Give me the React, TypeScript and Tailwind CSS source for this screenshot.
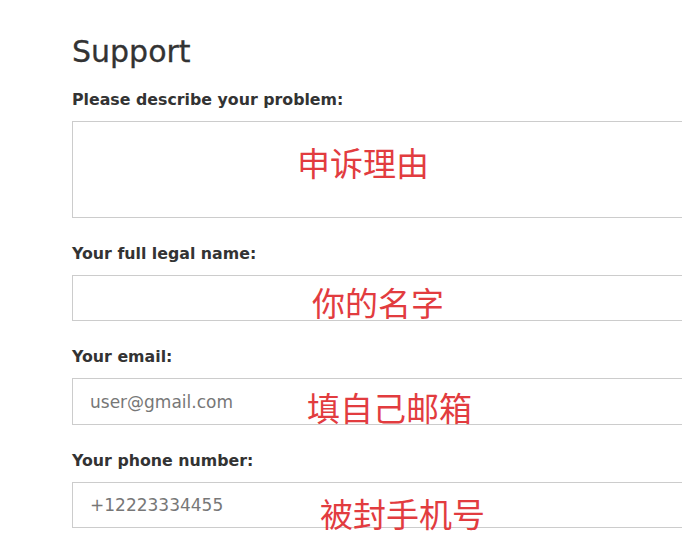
import React from "react";

const label = "text-[15.8px] leading-[20px] font-bold text-[#333333]";
const input =
  "block w-[680px] border border-[#cccccc] bg-white px-[17px] text-[17px] text-[#777777] outline-none placeholder:text-[#777777]";
const red =
  "absolute whitespace-nowrap text-[33px] leading-[33px] text-[#e23c3f]";

function Field({
  title,
  children,
}: {
  title: string;
  children: React.ReactNode;
}) {
  return (
    <div className="flex flex-col gap-[11px]">
      <label className={label}>{title}</label>
      {children}
    </div>
  );
}

export default function App() {
  return (
    <div
      className="relative w-[682px] h-[541px] overflow-hidden bg-white"
      style={{ fontFamily: '"DejaVu Sans", Verdana, sans-serif' }}
    >
      <div className="flex flex-col pl-[72px] pt-[34px]">
        <h1 className="text-[30px] leading-[36px] font-normal text-[#333333] [-webkit-text-stroke:0.3px_#333333]">
          Support
        </h1>

        <div className="mt-[20px] flex flex-col gap-[26px]">
          <Field title="Please describe your problem:">
            <textarea
              className={`${input} h-[97px] resize-none`}
              aria-label="problem"
            />
          </Field>
          <Field title="Your full legal name:">
            <input className={`${input} h-[46px]`} aria-label="name" />
          </Field>
          <Field title="Your email:">
            <input
              className={`${input} h-[47px]`}
              placeholder="user@gmail.com"
              aria-label="email"
            />
          </Field>
          <Field title="Your phone number:">
            <input
              className={`${input} h-[46px]`}
              placeholder="+12223334455"
              aria-label="phone"
            />
          </Field>
        </div>
      </div>

      <div
        className="pointer-events-none"
        style={{ fontFamily: '"Noto Sans CJK SC", sans-serif' }}
      >
        <span className={`${red} left-[297px] top-[146px]`}>申诉理由</span>
        <span className={`${red} left-[312px] top-[286px]`}>你的名字</span>
        <span className={`${red} left-[307px] top-[391px]`}>填自己邮箱</span>
        <span className={`${red} left-[320px] top-[497px]`}>被封手机号</span>
      </div>
    </div>
  );
}
